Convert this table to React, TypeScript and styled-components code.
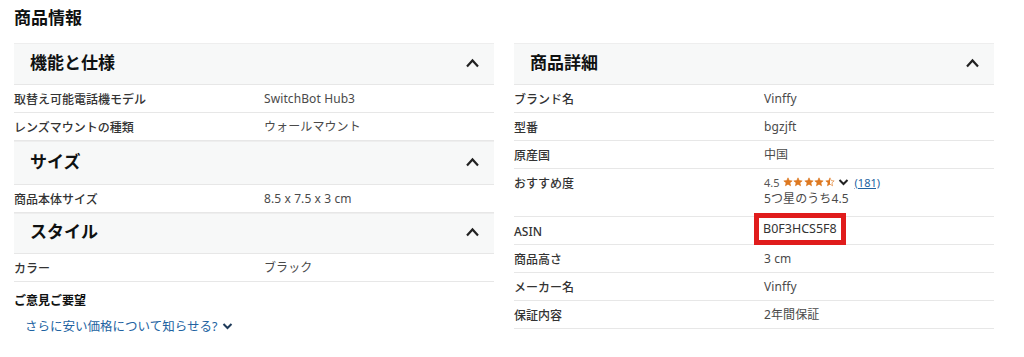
import React from "react";
import styled, { createGlobalStyle } from "styled-components";

const GlobalStyle = createGlobalStyle`
  html, body { margin: 0; padding: 0; background: #fff; }
  body { font-family: "Noto Sans", "Noto Sans CJK JP", sans-serif; color: #0f1111; }
`;

const Page = styled.div`
  padding: 5px 14px 0 14px;
  width: 980px;
`;

const Title = styled.h2`
  margin: 0;
  font-size: 17px;
  font-weight: 700;
  line-height: 26px;
  color: #0f1111;
`;

const Columns = styled.div`
  display: grid;
  grid-template-columns: 480px 480px;
  column-gap: 20px;
  margin-top: 12px;
`;

const Column = styled.div`
  display: flex;
  flex-direction: column;
`;

const SectionHeader = styled.div<{ $h: number }>`
  display: flex;
  align-items: center;
  justify-content: space-between;
  height: ${(p) => p.$h}px;
  background: #f7f8f8;
  border-top: 1px solid #eeeeee;
  border-bottom: 1px solid #e7e7e7;
  box-sizing: border-box;
  padding: 0 14px 3px 16px;
`;

const SectionTitle = styled.span`
  font-size: 17px;
  font-weight: 700;
  line-height: 20px;
  color: #0f1111;
`;

const Row = styled.div<{ $h?: number; $top?: boolean }>`
  display: grid;
  grid-template-columns: 250px 1fr;
  align-items: ${(p) => (p.$top ? "start" : "center")};
  height: ${(p) => p.$h ?? 28}px;
  box-sizing: border-box;
  border-bottom: 1px solid #e7e7e7;
  padding-top: ${(p) => (p.$top ? 5 : 1)}px;
  font-size: 12px;
`;

const Label = styled.span`
  color: #333;
  font-weight: 500;
`;

const Value = styled.span`
  color: #4a4a4a;
  line-height: 16px;
  letter-spacing: 0.1px;
`;

const Asin = styled.span`
  display: inline-block;
  border: 5px solid #e01c1c;
  padding: 2px 4px 2px 4px;
  line-height: 18px;
  margin: -5px 0 0 -10px;
  color: #333;
  font-size: 12.5px;
`;

const RatingLine = styled.div`
  display: flex;
  align-items: center;
  gap: 3px;
  font-size: 11px;
  color: #555;
  height: 16px;
`;

const Stars = styled.span`
  display: inline-flex;
  gap: 0.5px;
`;

const ReviewLink = styled.a`
  color: #2162a1;
  text-decoration: underline;
  font-size: 11px;
  margin-left: 3px;
`;

const Feedback = styled.div`
  margin-top: 9px;
  font-size: 12px;
  font-weight: 700;
  color: #0f1111;
`;

const PriceLink = styled.a`
  display: inline-flex;
  align-items: center;
  gap: 5px;
  margin: 7px 0 0 11px;
  color: #2162a1;
  font-size: 12.5px;
  text-decoration: none;
`;

const ChevronUp = () => (
  <svg width="15" height="10" viewBox="0 0 15 10">
    <path d="M2 8.5 L7.5 2.5 L13 8.5" fill="none" stroke="#222" strokeWidth="2.2" />
  </svg>
);

const ChevronDown = ({ color = "#222", w = 11 }: { color?: string; w?: number }) => (
  <svg width={w} height="8" viewBox="0 0 11 8">
    <path d="M1.5 2 L5.5 6 L9.5 2" fill="none" stroke={color} strokeWidth="2" />
  </svg>
);

const Star = ({ half }: { half?: boolean }) => (
  <svg width="10" height="10" viewBox="0 0 24 24">
    <defs>
      <linearGradient id="hs">
        <stop offset="50%" stopColor="#de7921" />
        <stop offset="50%" stopColor="#fff" />
      </linearGradient>
    </defs>
    <path
      d="M12 2 L14.9 8.6 L22 9.3 L16.6 14 L18.2 21 L12 17.3 L5.8 21 L7.4 14 L2 9.3 L9.1 8.6 Z"
      fill={half ? "url(#hs)" : "#de7921"}
      stroke="#de7921"
      strokeWidth="1.5"
    />
  </svg>
);

const Section = ({ title, h, rows }: { title: string; h: number; rows: [string, string][] }) => (
  <>
    <SectionHeader $h={h}>
      <SectionTitle>{title}</SectionTitle>
      <ChevronUp />
    </SectionHeader>
    {rows.map(([l, v]) => (
      <Row key={l}>
        <Label>{l}</Label>
        <Value>{v}</Value>
      </Row>
    ))}
  </>
);

export default function App() {
  return (
    <>
      <GlobalStyle />
      <Page>
        <Title>商品情報</Title>
        <Columns>
          <Column>
            <Section
              title="機能と仕様"
              h={42}
              rows={[
                ["取替え可能電話機モデル", "SwitchBot Hub3"],
                ["レンズマウントの種類", "ウォールマウント"],
              ]}
            />
            <Section title="サイズ" h={44} rows={[["商品本体サイズ", "8.5 x 7.5 x 3 cm"]]} />
            <Section title="スタイル" h={41} rows={[["カラー", "ブラック"]]} />
            <Feedback>ご意見ご要望</Feedback>
            <div>
              <PriceLink>
                さらに安い価格について知らせる?
                <ChevronDown color="#1f3b5a" />
              </PriceLink>
            </div>
          </Column>
          <Column>
            <SectionHeader $h={42}>
              <SectionTitle>商品詳細</SectionTitle>
              <ChevronUp />
            </SectionHeader>
            <Row>
              <Label>ブランド名</Label>
              <Value>Vinffy</Value>
            </Row>
            <Row>
              <Label>型番</Label>
              <Value>bgzjft</Value>
            </Row>
            <Row>
              <Label>原産国</Label>
              <Value>中国</Value>
            </Row>
            <Row $h={48} $top>
              <Label>おすすめ度</Label>
              <div>
                <RatingLine>
                  4.5
                  <Stars>
                    <Star />
                    <Star />
                    <Star />
                    <Star />
                    <Star half />
                  </Stars>
                  <ChevronDown w={11} />
                  <ReviewLink>(181)</ReviewLink>
                </RatingLine>
                <Value>5つ星のうち4.5</Value>
              </div>
            </Row>
            <Row>
              <Label>ASIN</Label>
              <div>
                <Asin>B0F3HCS5F8</Asin>
              </div>
            </Row>
            <Row>
              <Label>商品高さ</Label>
              <Value>3 cm</Value>
            </Row>
            <Row>
              <Label>メーカー名</Label>
              <Value>Vinffy</Value>
            </Row>
            <Row>
              <Label>保証内容</Label>
              <Value>2年間保証</Value>
            </Row>
          </Column>
        </Columns>
      </Page>
    </>
  );
}
